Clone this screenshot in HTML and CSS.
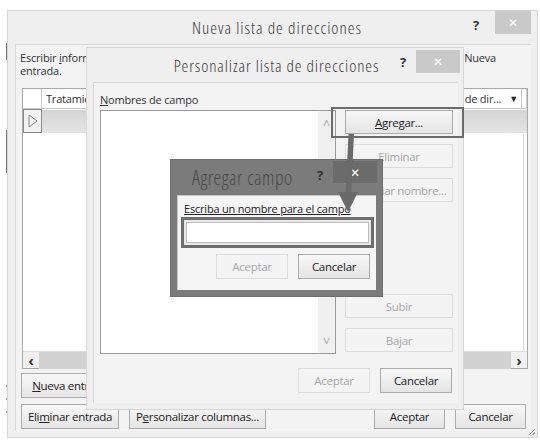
FILE: index.html
```html
<!DOCTYPE html>
<html lang="es">
<head>
    <meta charset="UTF-8">
    <meta name="viewport" content="width=device-width, initial-scale=1.0">
    <title>Nueva lista de direcciones</title>
    <link rel="stylesheet" href="styles.css">
</head>
<body>
<div class="desk">

    <!-- restos de la ventana de detras -->
    <span class="mark mark-1"></span>
    <span class="mark mark-2"></span>
    <span class="dot dot-1"></span>
    <span class="dot dot-2"></span>
    <span class="dot dot-3"></span>

    <!-- Nueva lista de direcciones -->
    <section class="win win-main">
        <header class="bar">
            <h1 class="bar-title">Nueva lista de direcciones</h1>
            <span class="bar-help">?</span>
            <span class="bar-close">&#x2715;</span>
        </header>
        <div class="panel main-panel">
            <p class="intro">
                <span class="intro-line">
                    <span class="intro-start">Escribir <u>i</u>nformación de destinatario en la tabla.</span>
                    <span class="intro-end">Nueva</span>
                </span>
                <span>entrada.</span>
            </p>
            <div class="grid">
                <div class="grid-head">
                    <span class="corner"></span>
                    <span class="hcell">Tratamiento</span>
                    <span class="hcell hcell-mid"></span>
                    <span class="hcell hcell-last">Nombre de dir... <i class="drop">&#x25BC;</i></span>
                    <span class="hcell-end"></span>
                </div>
                <div class="grid-row">
                    <span class="rowhead"><svg width="10" height="14" viewBox="0 0 10 14"><path d="M1 1 L9 7 L1 13 Z" fill="none" stroke="#888" stroke-width="1"/></svg></span>
                    <span class="rowcells"></span>
                </div>
                <div class="grid-body"></div>
                <div class="hscroll">
                    <span class="arrow">&lsaquo;</span>
                    <span class="thumb"></span>
                    <span class="arrow">&rsaquo;</span>
                </div>
            </div>
            <div class="main-actions">
                <button class="btn btn-wide"><u>N</u>ueva entrada</button>
                <div class="main-row">
                    <button class="btn btn-wide">Eli<u>m</u>inar entrada</button>
                    <button class="btn btn-cols">P<u>e</u>rsonalizar columnas...</button>
                    <span class="spacer"></span>
                    <button class="btn btn-std">Aceptar</button>
                    <button class="btn btn-std">Cancelar</button>
                </div>
            </div>
        </div>
        <span class="grip"></span>
    </section>

    <!-- Personalizar lista de direcciones -->
    <section class="win win-custom">
        <header class="bar">
            <h2 class="bar-title">Personalizar lista de direcciones</h2>
            <span class="bar-help">?</span>
            <span class="bar-close">&#x2715;</span>
        </header>
        <div class="panel custom-panel">
            <div class="fields">
                <div class="field-list">
                    <span class="list-label"><u>N</u>ombres de campo</span>
                    <div class="listbox">
                        <div class="list-items"></div>
                        <div class="vscroll">
                            <span>&#x2C4;</span>
                            <span>&#x2C5;</span>
                        </div>
                    </div>
                </div>
                <div class="field-btns">
                    <button class="btn"><u>A</u>gregar...</button>
                    <button class="btn" disabled>Eliminar</button>
                    <button class="btn" disabled>Cambiar nombre...</button>
                    <button class="btn btn-push" disabled>Subir</button>
                    <button class="btn" disabled>Bajar</button>
                </div>
            </div>
            <div class="custom-actions">
                <button class="btn btn-std" disabled>Aceptar</button>
                <button class="btn btn-std">Cancelar</button>
            </div>
        </div>
    </section>

    <!-- Agregar campo -->
    <section class="win win-add">
        <header class="bar">
            <h3 class="bar-title">Agregar campo</h3>
            <span class="bar-help">?</span>
            <span class="bar-close">&#x2715;</span>
        </header>
        <div class="panel add-panel">
            <label class="add-label" for="campo">Escriba un nombre para el campo</label>
            <div class="add-input"><input id="campo" type="text"></div>
            <div class="add-actions">
                <button class="btn btn-std" disabled>Aceptar</button>
                <button class="btn btn-std">Cancelar</button>
            </div>
        </div>
    </section>

    <!-- marca y flecha de la explicacion -->
    <span class="focus-frame"></span>
    <svg class="pointer" width="540" height="441" viewBox="0 0 540 441">
        <path d="M348.5 134 L354 134 L351 196 L345.5 196 Z" fill="#6a6a6a"/>
        <path d="M338 192 L358 192 L348 212 Z" fill="#6a6a6a"/>
    </svg>
</div>
</body>
</html>
```
FILE: styles.css
```css
* {
    box-sizing: border-box;
}

body {
    margin: 0;
    background-color: #ffffff;
    font-family: "Open Sans", Arial, sans-serif;
    font-size: 11px;
    font-stretch: 90%;
    letter-spacing: -0.2px;
    color: #333;
}

.desk {
    position: relative;
    width: 540px;
    height: 441px;
    overflow: hidden;
}

.mark, .dot {
    position: absolute;
    left: 6px;
    width: 2px;
    background-color: #777;
}

.mark-1 { top: 43px; height: 17px; }
.mark-2 { top: 130px; height: 43px; }
.dot { height: 2px; width: 1px; background-color: #999; }
.dot-1 { top: 385px; }
.dot-2 { top: 398px; }
.dot-3 { top: 411px; }

/* ventanas */

.win {
    position: absolute;
    display: flex;
    flex-direction: column;
    background-color: #efefef;
    border: 1px solid #d6d6d6;
}

.bar {
    position: relative;
    display: flex;
    align-items: center;
    justify-content: center;
    flex-shrink: 0;
}

.bar-title {
    margin: 0;
    font-weight: 300;
    font-stretch: 75%;
    font-size: 17px;
    letter-spacing: 1px;
    color: #3c3c3c;
    white-space: nowrap;
}

.bar-help {
    position: absolute;
    font-weight: 700;
    font-size: 13px;
    font-stretch: 100%;
    letter-spacing: 0;
    color: #333;
}

.bar-close {
    position: absolute;
    display: flex;
    align-items: center;
    justify-content: center;
    background-color: #c9c9c9;
    color: #fff;
    font-size: 12px;
}

.panel {
    background-color: #f3f3f3;
    border-top: 1px solid #d9d9d9;
    border-left: 1px solid #d9d9d9;
}

.win-main {
    left: 7px;
    top: 10px;
    width: 531px;
    height: 428px;
}

.win-main .bar {
    height: 33px;
}

.win-main .bar-title {
    margin-left: 9px;
}

.win-main .bar-help {
    left: 465px;
    top: 5px;
}

.win-main .bar-close {
    left: 487px;
    top: 0;
    width: 36px;
    height: 23px;
}

.main-panel {
    margin-left: 7px;
    width: 516px;
    height: 387px;
    padding: 6px 0 0 4px;
    display: flex;
    flex-direction: column;
}

.intro {
    margin: 0;
    display: flex;
    flex-direction: column;
    line-height: 13px;
    white-space: nowrap;
}

.intro-line {
    display: flex;
}

.intro-start {
    width: 66px;
    overflow: hidden;
}

.intro-end {
    margin-left: auto;
    padding-right: 35px;
}

.grid {
    margin-top: 11px;
    margin-left: 2px;
    width: 506px;
    height: 281px;
    display: flex;
    flex-direction: column;
    border: 1px solid #a8a8a8;
    background-color: #fff;
}

.grid-head {
    display: grid;
    grid-template-columns: 19px 46px 1fr 95px 5px;
    height: 20px;
    border-bottom: 1px solid #c8c8c8;
}

.corner, .hcell, .hcell-end {
    border-right: 1px solid #c8c8c8;
}

.hcell {
    display: flex;
    align-items: center;
    padding-left: 4px;
    white-space: nowrap;
    overflow: hidden;
}

.hcell-last {
    justify-content: flex-end;
    gap: 8px;
    padding-right: 3px;
}

.drop {
    font-style: normal;
    font-size: 9px;
    color: #222;
}

.grid-row {
    display: flex;
    height: 24px;
}

.rowhead {
    width: 19px;
    display: flex;
    align-items: center;
    justify-content: center;
    border: 1px solid #8a8a8a;
    background-color: #f2f2f2;
}

.rowcells {
    flex: 1;
    margin-top: 1px;
    background: linear-gradient(#d4d4d4, #e4e4e4);
}

.grid-body {
    flex: 1;
    margin-right: 3px;
    border-right: 1px solid #dadada;
}

.hscroll {
    display: flex;
    height: 17px;
    align-items: center;
    background-color: #f0f0f0;
    border-top: 1px solid #ddd;
}

.hscroll .arrow {
    width: 16px;
    text-align: center;
    font-size: 15px;
    font-weight: 700;
    color: #333;
    line-height: 15px;
}

.thumb {
    flex: 1;
    height: 17px;
    background-color: #d2d2d2;
}

.main-actions {
    margin-top: 4px;
    display: flex;
    flex-direction: column;
    gap: 6px;
}

.main-row {
    display: flex;
    gap: 10px;
    padding-right: 5px;
}

.spacer {
    flex: 1;
}

/* botones */

.btn {
    height: 25px;
    padding: 0 4px;
    font: inherit;
    font-size: 11.5px;
    letter-spacing: -0.3px;
    color: #222;
    background: linear-gradient(#f7f7f7, #e5e5e5);
    border: 1px solid #acacac;
    white-space: nowrap;
}

.btn:disabled {
    color: #a6a6a6;
    background: #f4f4f4;
    border-color: #dddddd;
}

.btn-wide {
    width: 98px;
    margin-left: 1px;
}

.btn-cols {
    width: 137px;
}

.btn-std {
    width: 71px;
}

.grip {
    position: absolute;
    right: 2px;
    bottom: 2px;
    width: 8px;
    height: 8px;
    background: linear-gradient(135deg, transparent 60%, #aaa 60%, #aaa 68%, transparent 68%, transparent 80%, #aaa 80%, #aaa 88%, transparent 88%);
}

/* Personalizar lista */

.win-custom {
    left: 86px;
    top: 47px;
    width: 378px;
    height: 363px;
    background-color: #efefef;
}

.win-custom .bar {
    height: 34px;
}

.win-custom .bar-title {
    margin-left: 3px;
    letter-spacing: 0.9px;
}

.win-custom .bar-help {
    left: 313px;
    top: 5px;
}

.win-custom .bar-close {
    left: 329px;
    top: 2px;
    width: 44px;
    height: 23px;
}

.custom-panel {
    margin-left: 6px;
    width: 365px;
    height: 321px;
    padding: 9px 0 0 6px;
    display: flex;
    flex-direction: column;
}

.fields {
    display: flex;
    gap: 9px;
}

.field-list {
    display: flex;
    flex-direction: column;
    gap: 3px;
}

.list-label {
    line-height: 15px;
}

.listbox {
    width: 236px;
    height: 244px;
    display: flex;
    border: 1px solid #9a9a9a;
    background-color: #fff;
}

.list-items {
    flex: 1;
}

.vscroll {
    width: 17px;
    display: flex;
    flex-direction: column;
    justify-content: space-between;
    align-items: center;
    padding: 3px 0 3px;
    background-color: #f0f0f0;
    color: #b0b0b0;
    font-size: 13px;
}

.field-btns {
    margin-top: 18px;
    padding-bottom: 2px;
    width: 108px;
    display: flex;
    flex-direction: column;
    gap: 10px;
}

.field-btns .btn {
    height: 24px;
}

.field-btns .btn-push {
    margin-top: auto;
}

.custom-actions {
    margin-top: 14px;
    margin-right: 6px;
    display: flex;
    justify-content: flex-end;
    gap: 10px;
}

.custom-actions .btn-std,
.add-actions .btn-std {
    width: 72px;
}

/* Agregar campo */

.win-add {
    left: 170px;
    top: 159px;
    width: 213px;
    height: 138px;
    background-color: #7b7b7b;
    border-color: #6e6e6e;
}

.win-add .bar {
    height: 35px;
    justify-content: flex-start;
}

.win-add .bar-title {
    margin-left: 21px;
    font-size: 19.5px;
    letter-spacing: 0.5px;
    color: #4a4a4a;
}

.win-add .bar-help {
    left: 146px;
    top: 6px;
    color: #333;
}

.win-add .bar-close {
    left: 162px;
    top: 1px;
    width: 44px;
    height: 22px;
    background-color: #6b6b6b;
}

.add-panel {
    margin-left: 6px;
    width: 199px;
    height: 95px;
    padding: 6px 0 0 3px;
    background-color: #f5f5f5;
    border-color: #c8c8c8;
    display: flex;
    flex-direction: column;
}

.add-label {
    padding-left: 3px;
    line-height: 14px;
    text-decoration: underline;
    color: #222;
}

.add-input {
    margin-top: 1px;
    width: 193px;
    height: 31px;
    padding: 2px;
    border: 3px solid #6e6e6e;
    background-color: #e8e8e8;
}

.add-input input {
    display: block;
    width: 100%;
    height: 100%;
    border: 1px solid #bdbdbd;
    background-color: #fff;
    outline: none;
}

.add-actions {
    margin-top: 6px;
    margin-right: 6px;
    display: flex;
    justify-content: flex-end;
    gap: 10px;
}

/* realce */

.focus-frame {
    position: absolute;
    left: 331px;
    top: 107px;
    width: 133px;
    height: 31px;
    border: 2px solid #6b6b6b;
}

.pointer {
    position: absolute;
    left: 0;
    top: 0;
    pointer-events: none;
}
```
